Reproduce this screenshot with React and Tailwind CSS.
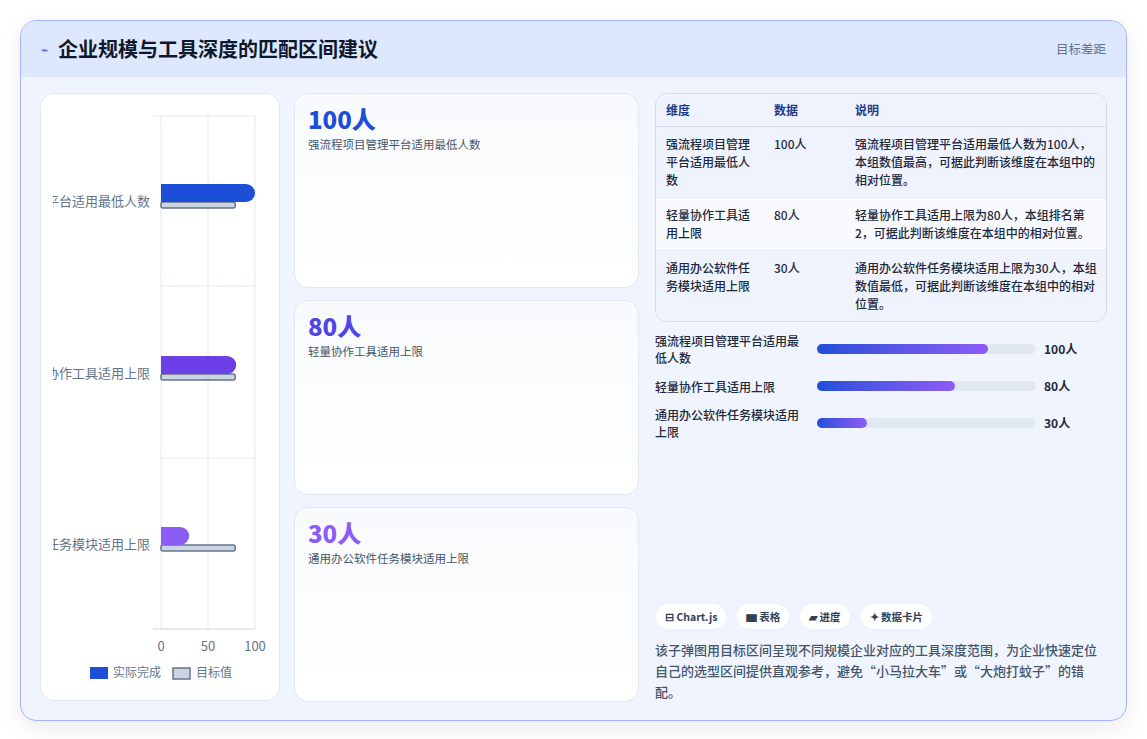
import React from "react";

const F = { fontFamily: '"Noto Sans CJK SC", "Noto Sans", sans-serif' };

function Chart() {
  const rows = [
    { label: "强流程项目管理平台适用最低人数", y: 200, v: 100, c: "#1d4ed8" },
    { label: "轻量协作工具适用上限", y: 372, v: 80, c: "#6d3fe6" },
    { label: "通用办公软件任务模块适用上限", y: 543, v: 30, c: "#8b5cf6" },
  ];
  const x0 = 120, w = 94;
  return (
    <svg width="240" height="608" viewBox="0 0 240 608" style={F}>
      <defs>
        <clipPath id="lc"><rect x="12" y="0" width="100" height="608" /></clipPath>
      </defs>
      <line x1={x0} y1="22" x2={x0} y2="535" stroke="#e2e8f0" />
      <line x1={x0 + 47} y1="22" x2={x0 + 47} y2="535" stroke="#e2e8f0" />
      <line x1={x0 + 94} y1="22" x2={x0 + 94} y2="535" stroke="#e2e8f0" />
      <line x1="112" y1="22" x2="214" y2="22" stroke="#e2e8f0" />
      <line x1={x0} y1="192" x2="214" y2="192" stroke="#e2e8f0" />
      <line x1={x0} y1="364" x2="214" y2="364" stroke="#e2e8f0" />
      <line x1="112" y1="535" x2="214" y2="535" stroke="#cbd5e1" />
      {rows.map((r, i) => (
        <g key={i}>
          <text x="109" y={r.y - 88} textAnchor="end" fontSize="13" fill="#64748b" clipPath="url(#lc)">{r.label}</text>
          <rect x={x0} y={r.y - 92} width={w * 0.8 - 1} height="6" rx="2" fill="#cbd5e1" stroke="#64748b" strokeWidth="1.5" />
          <path d={`M${x0} ${r.y - 110} h${w * r.v / 100 - 9} a9 9 0 0 1 9 9 a9 9 0 0 1 -9 9 h-${w * r.v / 100 - 9} z`} fill={r.c} />
        </g>
      ))}
      <text x={x0} y="557" textAnchor="middle" fontSize="13" fill="#64748b">0</text>
      <text x={x0 + 47} y="557" textAnchor="middle" fontSize="13" fill="#64748b">50</text>
      <text x={x0 + 94} y="557" textAnchor="middle" fontSize="13" fill="#64748b">100</text>
      <rect x="49" y="573" width="18" height="12" fill="#1d4ed8" />
      <text x="72" y="583" fontSize="12" fill="#64748b">实际完成</text>
      <rect x="132" y="574" width="17" height="11" fill="#cbd5e1" stroke="#64748b" strokeWidth="1.5" />
      <text x="155" y="583" fontSize="12" fill="#64748b">目标值</text>
    </svg>
  );
}

const cards = [
  { n: "100人", c: "text-[#1d4ed8]", t: "强流程项目管理平台适用最低人数" },
  { n: "80人", c: "text-[#4f46e5]", t: "轻量协作工具适用上限" },
  { n: "30人", c: "text-[#8b5cf6]", t: "通用办公软件任务模块适用上限" },
];

const table = [
  ["强流程项目管理平台适用最低人数", "100人", "强流程项目管理平台适用最低人数为100人，本组数值最高，可据此判断该维度在本组中的相对位置。"],
  ["轻量协作工具适用上限", "80人", "轻量协作工具适用上限为80人，本组排名第2，可据此判断该维度在本组中的相对位置。"],
  ["通用办公软件任务模块适用上限", "30人", "通用办公软件任务模块适用上限为30人，本组数值最低，可据此判断该维度在本组中的相对位置。"],
];

const prog = [
  ["强流程项目管理平台适用最低人数", 78, "100人"],
  ["轻量协作工具适用上限", 63, "80人"],
  ["通用办公软件任务模块适用上限", 23, "30人"],
];

export default function App() {
  return (
    <div className="w-[1147px] h-[739px] bg-white pt-[20px] pl-[20px]" style={F}>
      <div className="w-[1107px] h-[701px] rounded-[16px] border border-[#a5b4fc] bg-[#eff4fe] shadow-[0_8px_24px_rgba(0,0,0,0.08)] overflow-hidden flex flex-col">
        <div className="h-[56px] bg-[#dde7fd] flex items-center justify-between px-[20px] shrink-0">
          <div className="flex items-center gap-[10px]">
            <span className="text-[#3b5bdb] text-[12px]">⌁</span>
            <span className="text-[20px] font-bold text-[#0f172a]">企业规模与工具深度的匹配区间建议</span>
          </div>
          <span className="text-[12.5px] text-[#64748b]">目标差距</span>
        </div>
        <div className="flex flex-1 px-[19px] pt-[16px] pb-[18px] gap-[14px]">
          <div className="w-[240px] h-[608px] bg-white rounded-[14px] border border-[#e2e8f0]">
            <Chart />
          </div>
          <div className="w-[345px] flex flex-col gap-[12px]">
            {cards.map((c, i) => (
              <div key={i} className="h-[195px] rounded-[14px] border border-[#e2e8f0] bg-gradient-to-b from-[#f8fafd] to-white px-[13px] pt-[9px]">
                <div className={`text-[24px] font-extrabold leading-[32px] ${c.c}`}>{c.n}</div>
                <div className="text-[11.5px] text-[#475569] mt-[1px]">{c.t}</div>
              </div>
            ))}
          </div>
          <div className="flex-1 ml-[2px] flex flex-col">
            <div className="rounded-[12px] border border-[#d6dde8] overflow-hidden text-[12px] text-[#1e293b] font-medium">
              <div className="flex h-[33px] items-center bg-[#eef3fe] border-b border-[#d6dde8] text-[#1e3a8a] font-bold">
                <div className="w-[118px] pl-[10px]">维度</div>
                <div className="w-[81px]">数据</div>
                <div className="flex-1">说明</div>
              </div>
              {table.map((r, i) => (
                <div key={i} className={`flex py-[8px] leading-[18px] ${i === 1 ? "bg-[#f8faff]" : "bg-[#eef3fe]"} ${i < 2 ? "border-b border-[#e2e8f0]" : ""}`}>
                  <div className="w-[118px] pl-[10px] pr-[14px]">{r[0]}</div>
                  <div className="w-[81px]">{r[1]}</div>
                  <div className="flex-1 pr-[6px]">{r[2]}</div>
                </div>
              ))}
            </div>
            <div className="flex flex-col gap-[6px] mt-[10px]">
              {prog.map((p, i) => (
                <div key={i} className="flex items-center min-h-[28px]">
                  <div className="w-[150px] text-[12px] leading-[17px] text-[#1e293b] font-medium">{p[0]}</div>
                  <div className="ml-[12px] w-[219px] h-[10px] rounded-full bg-[#e2e8f0]">
                    <div className="h-full rounded-full bg-gradient-to-r from-[#1d4ed8] to-[#8b5cf6]" style={{ width: `${p[1]}%` }} />
                  </div>
                  <div className="ml-[8px] text-[12px] font-bold text-[#1e293b]">{p[2]}</div>
                </div>
              ))}
            </div>
            <div className="flex-1" />
            <div className="flex gap-[9px] text-[10.5px] font-bold text-[#334155]">
              <span className="px-[9px] h-[27px] flex items-center rounded-full bg-white border border-[#eef2f7]">⊟ Chart.js</span>
              <span className="px-[9px] h-[27px] flex items-center rounded-full bg-white border border-[#eef2f7]">▆ 表格</span>
              <span className="px-[9px] h-[27px] flex items-center rounded-full bg-white border border-[#eef2f7]">▰ 进度</span>
              <span className="px-[9px] h-[27px] flex items-center rounded-full bg-white border border-[#eef2f7]">✦ 数据卡片</span>
            </div>
            <p className="mt-[9px] pr-[8px] text-[13px] leading-[21px] text-[#475569] font-medium">该子弹图用目标区间呈现不同规模企业对应的工具深度范围，为企业快速定位自己的选型区间提供直观参考，避免“小马拉大车”或“大炮打蚊子”的错配。</p>
          </div>
        </div>
      </div>
    </div>
  );
}
